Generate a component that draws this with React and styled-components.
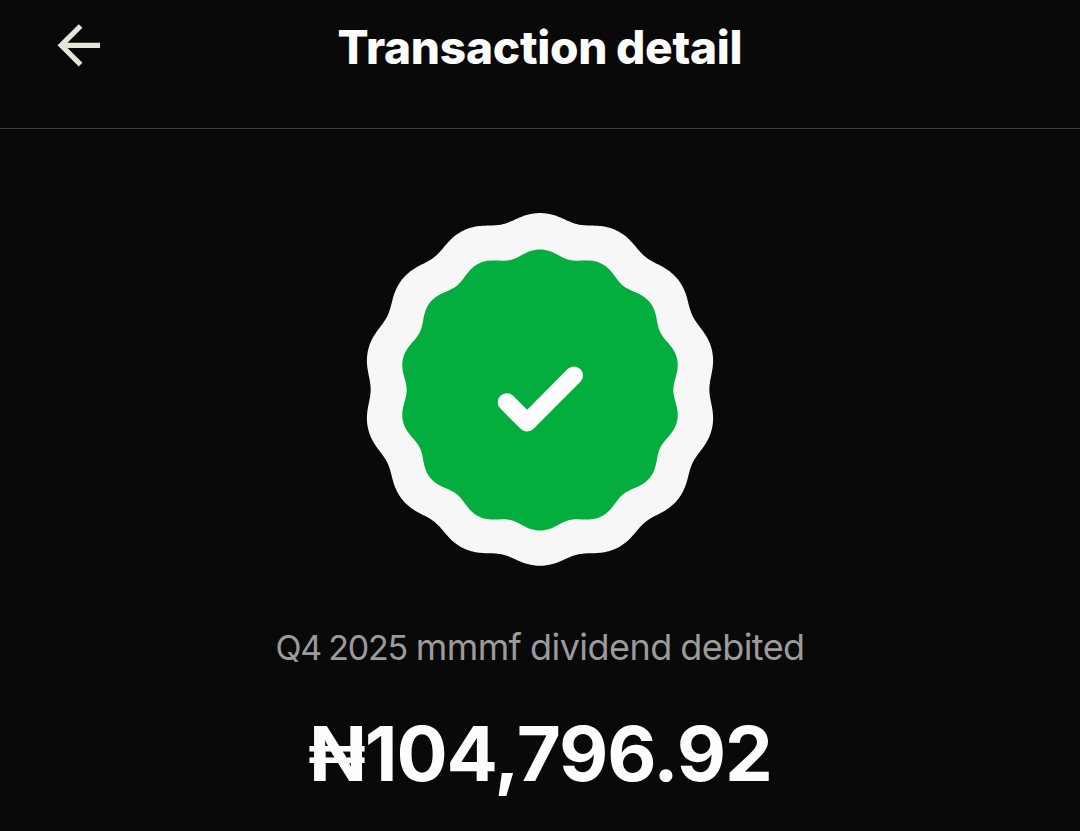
import styled, { createGlobalStyle } from "styled-components";

const GlobalStyle = createGlobalStyle`
  body {
    margin: 0;
    background-color: #090909;
    font-family: Inter, "Liberation Sans", sans-serif;
  }
`;

const Page = styled.div`
  box-sizing: border-box;
  width: 100%;
  height: 831px;
  overflow: hidden;
  background-color: #090909;
  display: flex;
  flex-direction: column;
`;

const Header = styled.header`
  box-sizing: border-box;
  height: 129px;
  padding: 19px 56px 0;
  border-bottom: 1px solid #404040;
  display: grid;
  grid-template-columns: 48px 1fr 48px;
  align-items: start;
`;

const BackButton = styled.button`
  width: 48px;
  height: 52px;
  padding: 0;
  border: none;
  background: none;
  color: #e6e5da;
  cursor: pointer;
  & svg {
    display: block;
  }
`;

const Title = styled.h1`
  margin: 0;
  font-size: 46px;
  line-height: 56px;
  font-weight: 800;
  letter-spacing: -0.25px;
  word-spacing: -1px;
  text-align: center;
  white-space: nowrap;
  color: #fdfdfd;
`;

const Summary = styled.main`
  display: flex;
  flex-direction: column;
  align-items: center;
  padding-top: 81px;
`;

const Seal = styled.svg`
  display: block;
  width: 360px;
  height: 360px;
`;

const Description = styled.p`
  margin: 53px 0 0;
  font-size: 36px;
  line-height: 48px;
  font-weight: 440;
  letter-spacing: -0.55px;
  word-spacing: -1px;
  white-space: nowrap;
  color: #9b9b9b;
`;

const Period = styled.span`
  font-size: 34px;
  letter-spacing: -1.2px;
`;

const Amount = styled.p`
  margin: 36px 0 0;
  font-size: 76px;
  line-height: 90px;
  font-weight: 700;
  letter-spacing: -1.1px;
  white-space: nowrap;
  color: #fdfdfd;
`;

const LOBES = 14;

// closed wavy circle centred on 0,0; roundness widens the lobes
const wavyCircle = (radius, amplitude, roundness) => {
  const points = [];
  for (let i = 0; i < 720; i++) {
    const angle = (i / 720) * Math.PI * 2;
    const r =
      radius +
      amplitude * Math.cos(LOBES * angle) -
      roundness * Math.cos(LOBES * 2 * angle);
    points.push(
      `${(r * Math.sin(angle)).toFixed(2)} ${(-r * Math.cos(angle)).toFixed(2)}`
    );
  }
  return `M${points.join("L")}Z`;
};

const ArrowLeft = () => (
  <svg width="48" height="52" viewBox="0 0 48 52" fill="none">
    <path
      d="M24.6 7L5.2 26.3L24.6 45.6M5.2 26.3H44"
      stroke="currentColor"
      strokeWidth="5.2"
    />
  </svg>
);

const SuccessSeal = () => (
  <Seal viewBox="-180 -180 360 360">
    <path
      d={wavyCircle(173.1, 3.5, 0.25)}
      transform="translate(0 -0.6)"
      fill="#f7f7f7"
    />
    <path d={wavyCircle(137.1, 3.6, 0.15)} fill="#04ae3e" />
    <path
      d="M-33.3 12.2L-12.8 32.5L34 -14.6"
      fill="none"
      stroke="#fdfdfd"
      strokeWidth="18"
      strokeLinecap="round"
      strokeLinejoin="round"
    />
  </Seal>
);

const App = () => {
  return (
    <>
      <GlobalStyle />
      <Page>
        <Header>
          <BackButton aria-label="Back">
            <ArrowLeft />
          </BackButton>
          <Title>Transaction detail</Title>
        </Header>
        <Summary>
          <SuccessSeal />
          <Description>
            <Period>Q4 2025</Period> mmmf dividend debited
          </Description>
          <Amount>₦104,796.92</Amount>
        </Summary>
      </Page>
    </>
  );
};

export default App;
